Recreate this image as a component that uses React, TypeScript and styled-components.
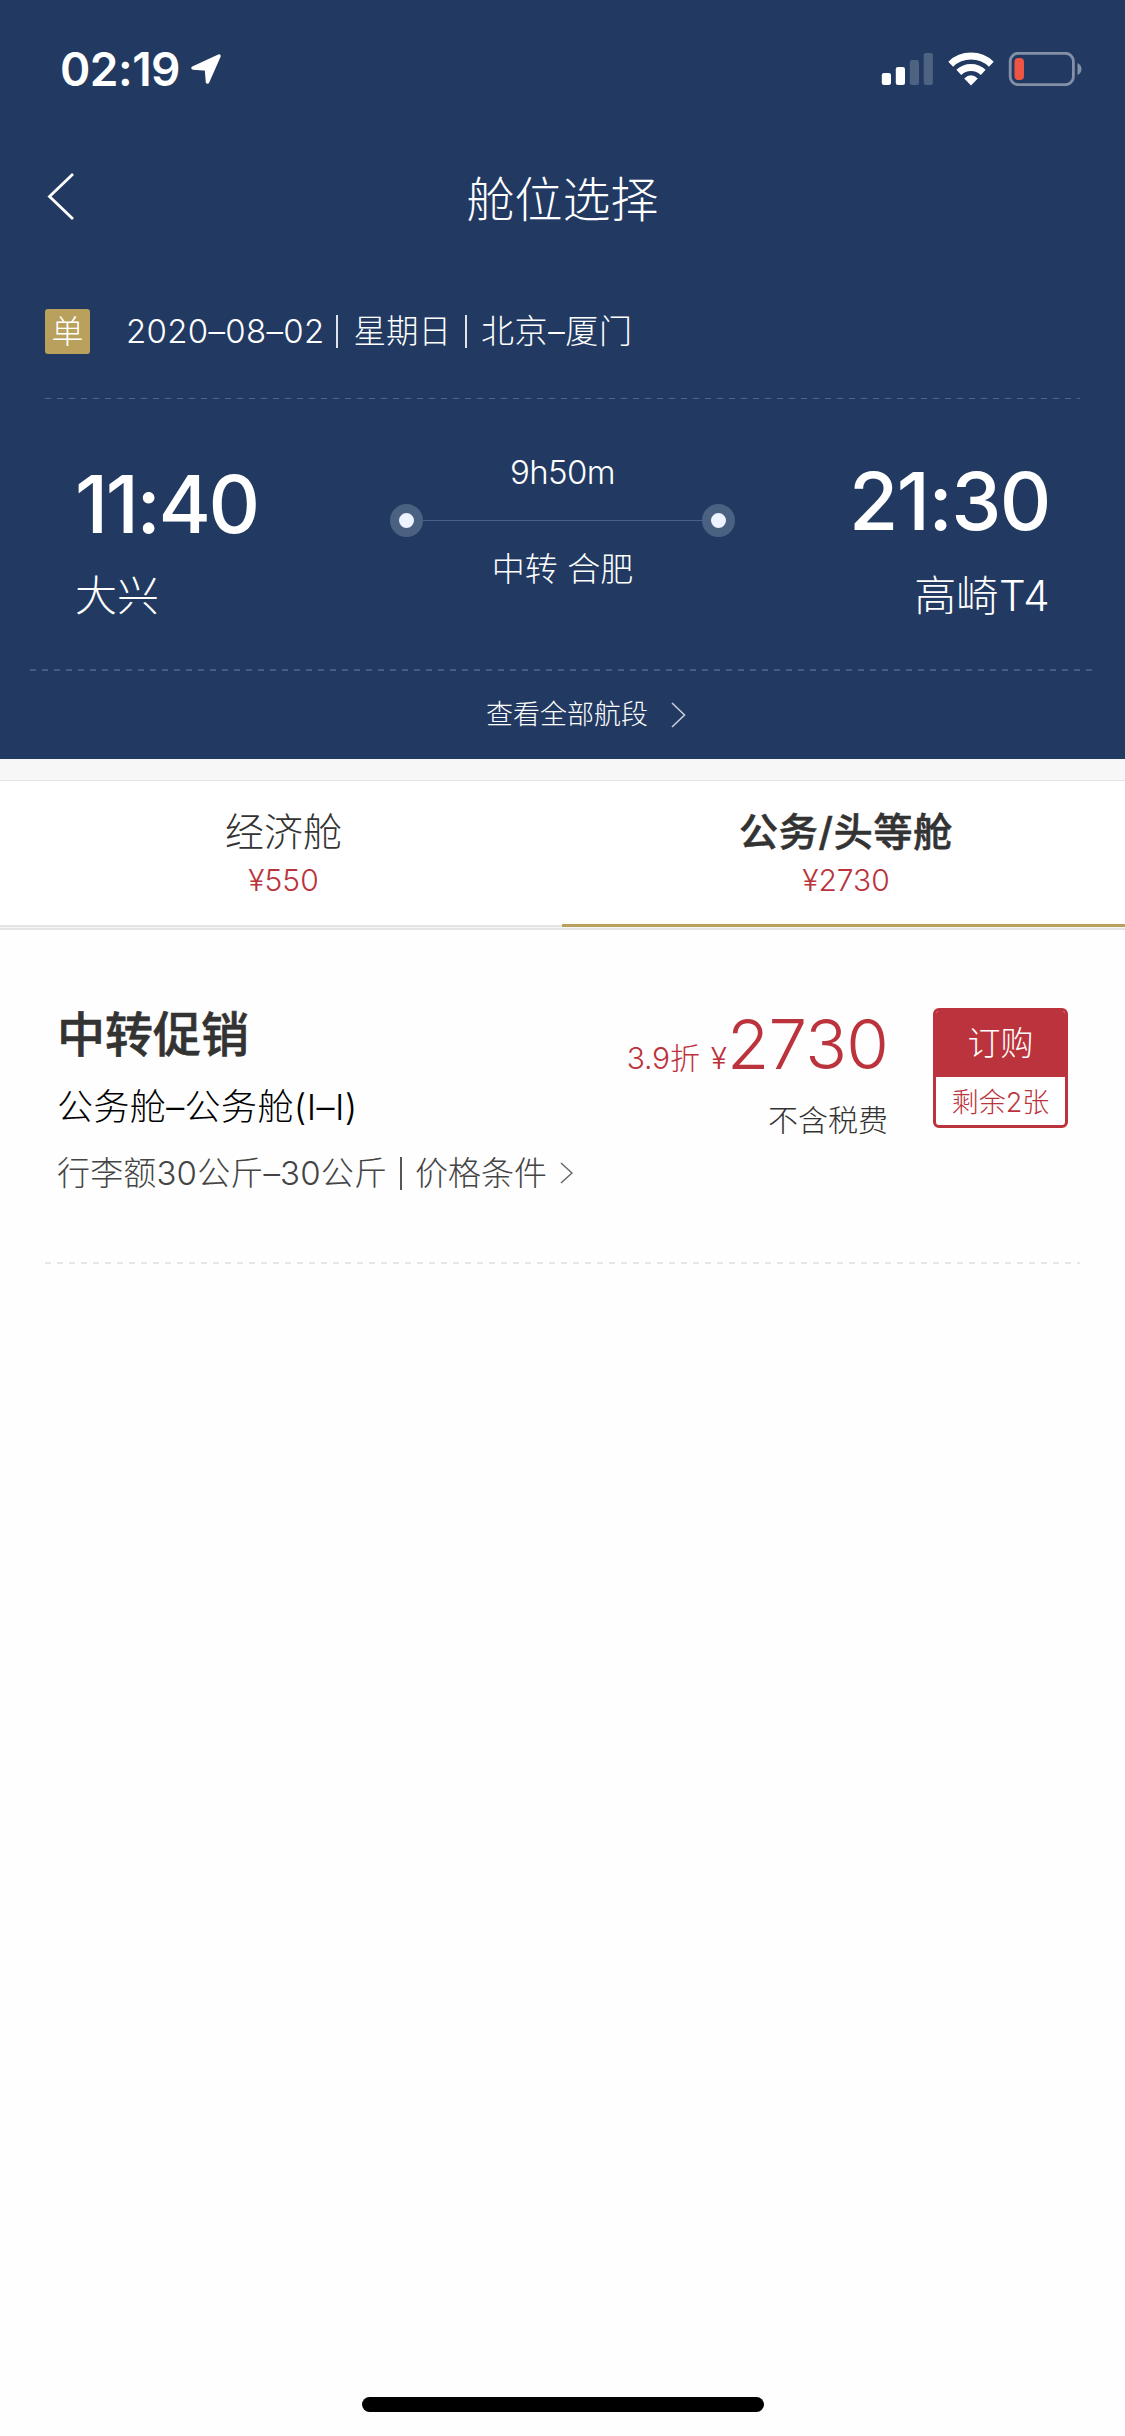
import React from "react";
import styled, { createGlobalStyle } from "styled-components";

const NAVY = "#223a62";
const GOLD = "#b9a15d";
const RED = "#bb333c";
const LINE = "#e4e4e4";

const GlobalStyle = createGlobalStyle`
  * { box-sizing: border-box; }
  body {
    margin: 0;
    background: #fefefe;
    font-family: Inter, "Noto Sans CJK SC", sans-serif;
    font-weight: 300;
    color: #333;
  }
`;

const Screen = styled.main`
  width: 1125px;
  height: 2436px;
  display: flex;
  flex-direction: column;
  background: #fefefe;
  overflow: hidden;
`;

const Header = styled.header`
  height: 759px;
  background: ${NAVY};
  color: #fff;
`;

const Text = styled.span<{ $size: number; $line: number; $weight?: number; $track?: number; $color?: string }>`
  display: block;
  white-space: pre;
  font-size: ${(p) => p.$size}px;
  line-height: ${(p) => p.$line}px;
  font-weight: ${(p) => p.$weight ?? 300};
  letter-spacing: ${(p) => p.$track ?? 0}px;
  color: ${(p) => p.$color ?? "inherit"};
`;

const Strong = styled(Text)`
  -webkit-text-stroke: 0.6px currentColor;
`;

const StatusBar = styled.div`
  height: 138px;
  padding: 0 43px 0 60px;
  display: flex;
  align-items: center;
`;

const LocationIcon = styled.svg`
  margin-left: 10px;
`;

const StatusIcons = styled.svg`
  margin-left: auto;
`;

const NavBar = styled.nav`
  height: 120px;
  padding: 0 46px;
  display: grid;
  grid-template-columns: 60px 1fr 60px;
  align-items: center;
  justify-items: center;
`;

const Title = styled(Text)`
  margin: 0;
  padding-top: 3px;
`;

const BackIcon = styled.svg`
  justify-self: start;
  margin-bottom: 3px;
`;

const TripRow = styled.div`
  height: 140px;
  padding: 51px 45px 44px;
  display: flex;
  align-items: center;
`;

const TripBadge = styled.span`
  width: 45px;
  height: 45px;
  margin-right: 36px;
  border-radius: 3px;
  display: grid;
  place-items: center;
  background: ${GOLD};
`;

const TripInfo = styled.div`
  display: flex;
  align-items: center;
`;

const Divider = styled.i<{ $gap: number; $right?: number; $color?: string }>`
  width: 2px;
  height: 33px;
  margin: 0 ${(p) => p.$right ?? p.$gap}px 0 ${(p) => p.$gap}px;
  background: ${(p) => p.$color ?? "#dfe3ea"};
`;

const Dashes = styled.div<{ $inset: number; $end: number; $thick: number; $color: string }>`
  height: ${(p) => p.$thick}px;
  margin: 0 ${(p) => p.$end}px 0 ${(p) => p.$inset}px;
  background: repeating-linear-gradient(90deg, ${(p) => p.$color} 0 6px, transparent 6px 12px);
`;

const Flight = styled.section`
  height: 270px;
  padding: 0 75px;
  display: grid;
  grid-template-columns: 315px 345px 315px;
`;

const Stop = styled.div<{ $end?: boolean }>`
  padding-top: ${(p) => (p.$end ? 62 : 65)}px;
  display: flex;
  flex-direction: column;
  gap: ${(p) => (p.$end ? 30 : 27)}px;
  align-items: ${(p) => (p.$end ? "flex-end" : "flex-start")};
`;

const Route = styled.div`
  padding-top: 53px;
  display: flex;
  flex-direction: column;
  align-items: center;
`;

const Track = styled.div`
  width: 345px;
  height: 33px;
  margin: 12px 0;
  display: flex;
  align-items: center;
`;

const TrackLine = styled.i`
  flex: 1;
  height: 1px;
  background: #48608a;
`;

const TrackDot = styled.i`
  width: 33px;
  height: 33px;
  border: 9px solid #4b6181;
  border-radius: 50%;
  background: #edf3ff;
`;

const AllSegments = styled.div`
  height: 88px;
  padding-left: 486px;
  display: flex;
  align-items: center;
  gap: 23px;
`;

const Spacer = styled.div`
  height: 22px;
  background: #f7f7f7;
  border-bottom: 1px solid ${LINE};
`;

const Tabs = styled.div`
  height: 149px;
  display: grid;
  grid-template-columns: 562px 563px;
  align-items: start;
  background: #f5f5f5;
  border-bottom: 2px solid ${LINE};
`;

const Tab = styled.div<{ $active?: boolean }>`
  height: 146px;
  padding: 26px 0 0 5px;
  display: flex;
  flex-direction: column;
  align-items: center;
  gap: 5px;
  background: #fff;
  border-bottom: ${(p) => (p.$active ? `3px solid ${GOLD}` : `2px solid ${LINE}`)};
`;

const Fare = styled.article`
  height: 332px;
  padding: 75px 57px 0 57px;
  display: flex;
`;

const FareInfo = styled.div`
  flex: 1;
  display: flex;
  flex-direction: column;
`;

const CabinName = styled(Text)`
  margin-top: 20px;
`;

const Conditions = styled.div`
  margin-top: 24px;
  display: flex;
  align-items: center;
`;

const FarePrice = styled.div`
  padding-top: 4px;
  margin-right: 45px;
  display: flex;
  flex-direction: column;
  align-items: flex-end;
  gap: 7px;
`;

const PriceLine = styled.div`
  display: flex;
  align-items: baseline;
  color: ${RED};
`;

const Discount = styled(Text)`
  margin-right: 11px;
`;

const BuyButton = styled.button`
  width: 135px;
  height: 120px;
  margin-top: 3px;
  padding: 0;
  border: 3px solid ${RED};
  border-radius: 6px;
  overflow: hidden;
  display: flex;
  flex-direction: column;
  align-items: stretch;
  background: #fff;
  font: inherit;
  text-align: center;
`;

const BuyTop = styled.span`
  flex: 0 0 66px;
  padding-top: 8px;
  background: ${RED};
`;

const SeatsLeft = styled(Text)`
  padding-top: 4px;
`;

const HomeBar = styled.div`
  width: 402px;
  height: 15px;
  margin: auto 0 24px 362px;
  border-radius: 8px;
  background: #000;
`;

const Chevron = ({ w, h, color, stroke, ml = 0 }: { w: number; h: number; color: string; stroke: number; ml?: number }) => (
  <svg width={w + 2 + ml} height={h + 2} viewBox={`${-1 - ml} -1 ${w + 2 + ml} ${h + 2}`} fill="none" stroke={color} strokeWidth={stroke}>
    <path d={`M0 0L${w} ${h / 2}L0 ${h}`} />
  </svg>
);

export default function App() {
  return (
    <Screen>
      <GlobalStyle />
      <Header>
        <StatusBar>
          <Text $size={46} $line={60} $weight={600} $track={-0.5}>02:19</Text>
          <LocationIcon width="32" height="32" viewBox="0 0 32 32">
            <path d="M29 3L17.5 29L16.5 16L3 15Z" fill="#fff" stroke="#fff" strokeWidth="3.5" strokeLinejoin="round" />
          </LocationIcon>
          <StatusIcons width="201" height="34" viewBox="880.5 52 201 34">
            <g fill="#fff">
              <rect x="881.3" y="73" width="9.2" height="12" rx="2.2" />
              <rect x="895.3" y="67" width="9.2" height="18" rx="2.2" />
              <g fill="#4e6282">
                <rect x="909.3" y="60" width="9.2" height="25" rx="2.2" />
                <rect x="923.2" y="53" width="9.2" height="32" rx="2.2" />
              </g>
            </g>
            <g fill="none" stroke="#fff" strokeWidth="7">
              <path d="M950.2 64.2A29.5 29.5 0 0 1 990.8 64.2" />
              <path d="M958.3 72.4A17.8 17.8 0 0 1 982.7 72.4" />
            </g>
            <path d="M963.7 78.5Q970.5 72 977.3 78.5L970.5 85.5Z" fill="#fff" />
            <rect x="1009.7" y="53.3" width="63.2" height="31.4" rx="8" fill="none" stroke="#8390a6" strokeWidth="2.8" />
            <path d="M1077 63Q1081 65 1081 69T1077 75Z" fill="#8390a6" />
            <rect x="1014" y="58" width="9.5" height="22" rx="4" fill="#ee5545" />
          </StatusIcons>
        </StatusBar>
        <NavBar>
          <BackIcon width="29" height="47" viewBox="0 0 29 47" fill="none" stroke="#fff" strokeWidth="2.8">
            <path d="M27 1L3.5 23.5L27 46" />
          </BackIcon>
          <Title as="h1" $size={48} $line={60}>舱位选择</Title>
        </NavBar>
        <TripRow>
          <TripBadge><Text $size={32} $line={45}>单</Text></TripBadge>
          <TripInfo>
            <Text $size={33} $line={45} $track={0.3}>2020–08–02</Text>
            <Divider $gap={12} $right={15} />
            <Text $size={32.5} $line={47}>星期日</Text>
            <Divider $gap={14} />
            <Text $size={33} $line={47} $track={0.6}>北京–厦门</Text>
          </TripInfo>
        </TripRow>
        <Dashes $inset={45} $end={45} $thick={1} $color="#4c6490" />
        <Flight>
          <Stop>
            <Text $size={80} $line={80} $weight={500} $track={-2.4}>11:40</Text>
            <Text $size={42} $line={50}>大兴</Text>
          </Stop>
          <Route>
            <Text $size={33} $line={40} $track={-0.6}>9h50m</Text>
            <Track><TrackDot /><TrackLine /><TrackDot /></Track>
            <Text $size={33} $line={40}>中转 合肥</Text>
          </Route>
          <Stop $end>
            <Text $size={80} $line={80} $weight={500} $track={-1.5}>21:30</Text>
            <Text $size={42} $line={50} $track={0.4}>高崎T4</Text>
          </Stop>
        </Flight>
        <Dashes $inset={30} $end={33} $thick={2} $color="#465d87" />
        <AllSegments>
          <Text $size={27} $line={40}>查看全部航段</Text>
          <Chevron w={12.5} h={24} color="#c6cdd9" stroke={1.6} />
        </AllSegments>
      </Header>
      <Spacer />
      <Tabs>
        <Tab>
          <Text $size={39} $line={50}>经济舱</Text>
          <Text $size={30} $line={36} $weight={350} $color={RED}>¥550</Text>
        </Tab>
        <Tab $active>
          <Strong $size={39} $line={50} $weight={500} $track={0.8}>公务/头等舱</Strong>
          <Text $size={30} $line={36} $weight={350} $color={RED}>¥2730</Text>
        </Tab>
      </Tabs>
      <Fare>
        <FareInfo>
          <Strong $size={48} $line={60} $weight={500}>中转促销</Strong>
          <CabinName $size={36} $line={44} $color="#000" $track={0.4}>公务舱–公务舱(I–I)</CabinName>
          <Conditions>
            <Text $size={33} $line={40} $color="#444" $track={0.15}>行李额30公斤–30公斤</Text>
            <Divider $gap={13} $color="#555" />
            <Text $size={33} $line={40} $color="#444">价格条件</Text>
            <Chevron w={11} h={20} color="#666" stroke={1.5} ml={13} />
          </Conditions>
        </FareInfo>
        <FarePrice>
          <PriceLine>
            <Discount $size={30} $line={70} $track={-0.2}>3.9折</Discount>
            <Text $size={30} $line={70}>¥</Text>
            <Text $size={69} $line={70} $track={-0.8}>2730</Text>
          </PriceLine>
          <Text $size={30} $line={40}>不含税费</Text>
        </FarePrice>
        <BuyButton>
          <BuyTop><Text $size={33} $line={48} $color="#fff">订购</Text></BuyTop>
          <SeatsLeft $size={27} $line={44} $color={RED}>剩余2张</SeatsLeft>
        </BuyButton>
      </Fare>
      <Dashes $inset={45} $end={45} $thick={2} $color="#e6e6e6" />
      <HomeBar />
    </Screen>
  );
}
